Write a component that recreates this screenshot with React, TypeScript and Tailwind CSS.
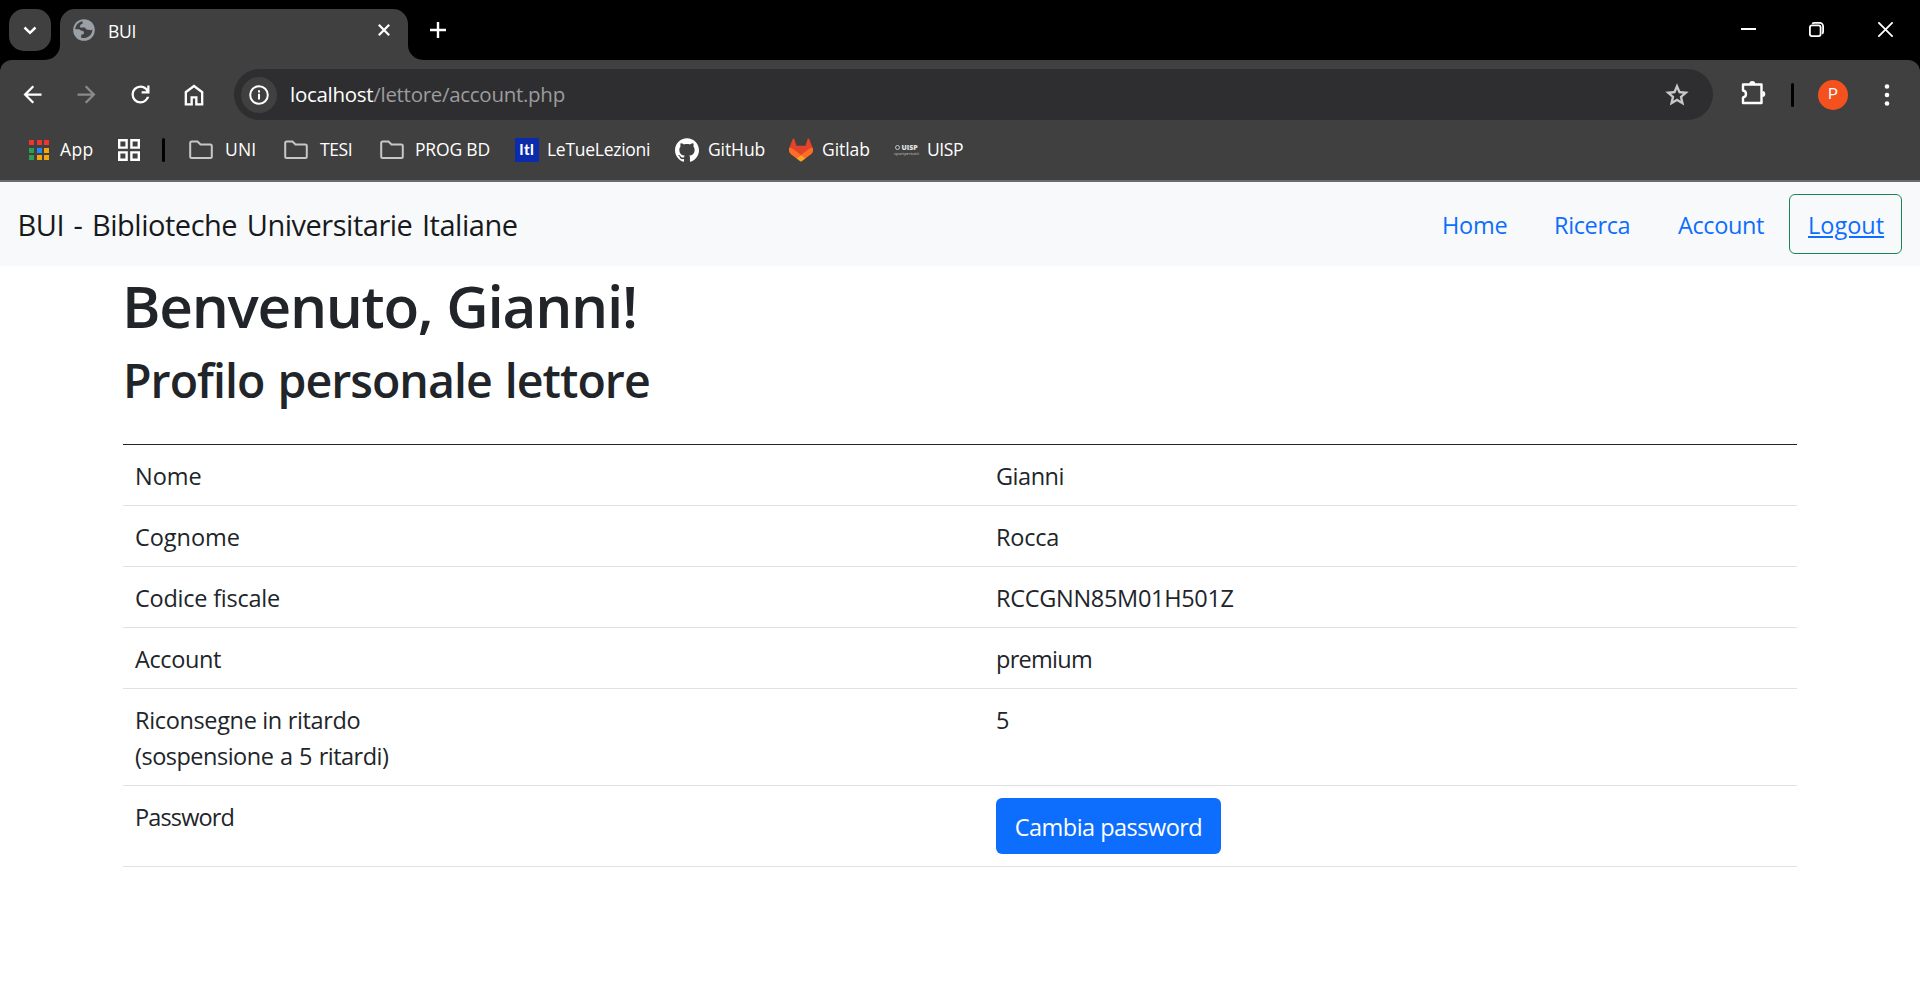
import type { ReactNode } from 'react';
import { SiGithub } from 'react-icons/si';

function Symbol({ d, size, className = '' }: { d: string; size: number; className?: string }) {
  return (
    <svg width={size} height={size} viewBox="0 -960 960 960" fill="currentColor" className={`shrink-0 ${className}`}>
      <path d={d} />
    </svg>
  );
}

const BACK = 'm313-440 224 224-57 56-320-320 320-320 57 56-224 224h487v80H313Z';
const FORWARD = 'M647-440H160v-80h487L423-744l57-56 320 320-320 320-57-56 224-224Z';
const REFRESH =
  'M480-160q-134 0-227-93t-93-227q0-134 93-227t227-93q69 0 132 28.5T720-690v-110h80v280H520v-80h168q-32-56-87.5-88T480-720q-100 0-170 70t-70 170q0 100 70 170t170 70q77 0 139-44t87-116h84q-28 106-114 173t-196 67Z';
const HOME = 'M240-200h120v-240h240v240h120v-360L480-740 240-560v360Zm-80 80v-480l320-240 320 240v480H520v-240h-80v240H160Z';
const STAR =
  'm354-287 126-76 126 77-33-144 111-96-146-13-58-136-58 135-146 13 111 97-33 143ZM233-120l65-281L80-590l288-25 112-265 112 265 288 25-218 189 65 281-247-149-247 149Z';

function Globe() {
  return (
    <svg width="22" height="22" viewBox="0 0 22 22" className="shrink-0">
      <circle cx="11" cy="11" r="10.8" fill="#9aa0a6" />
      <path d="M2.2 10.2C2.6 6 5.6 3 9.4 2.3l.3 1.6c0 .9-.8 1.1-1.6 1.3-.8.3-.5 1.3-1.1 1.9-.5.5-.2 1.3.6 1.3h3.7c1.4 0 1.4 1.8 2.6 2.1 1.1.3 2 .1 2.9.5 1 .4 1.7 0 2.7-.4-.1 2.200-.9 4.200-2.300 5.700-1.200 1.200-2.600 2-4.200 2.400-1.700.5-3.500.4-5-.2l.2-1.900c.1-.9 1-1.200 1.900-1.300 1-.2.9-1.200.8-2-.1-1-.9-1.400-1.900-1.500-1.200-.1-1.900-1-2.700-1.500Z" fill="#404040" />
    </svg>
  );
}

function Puzzle() {
  return (
    <svg width="26" height="26" viewBox="0 0 26 26" className="shrink-0" fill="none">
      <path d="M2 4.500H20.500V23H2V17.500C4.600 17 5 15.600 5 14C5 12.400 4.600 11 2 10.500Z" stroke="#fff" strokeWidth="2.400" strokeLinejoin="round" />
      <path d="M8.300 4a3 3 0 0 1 6 0ZM21.300 11a3 3 0 0 1 0 6Z" fill="#fff" />
    </svg>
  );
}

function Folder() {
  return (
    <svg width="24" height="20" viewBox="0 0 24 20" fill="none" stroke="#c7c7c7" strokeWidth="2">
      <path d="M1.200 3q0-1.500 1.500-1.500h5.800l3 3h9.800q1.500 0 1.500 1.500v10.500q0 1.500-1.500 1.500H2.700q-1.500 0-1.500-1.500Z" />
    </svg>
  );
}

function AppsDots() {
  const colors = ['#f0352d', '#f0352d', '#f0352d', '#2f9e52', '#1e88f5', '#f2a60c', '#2f9e52', '#f2a60c', '#f2a60c'];
  return (
    <span className="grid grid-cols-3 gap-[2.500px]">
      {colors.map((c, i) => (
        <i key={i} className="size-[5px]" style={{ background: c }} />
      ))}
    </span>
  );
}

function TabGroups() {
  return (
    <svg width="22" height="22" viewBox="0 0 22 22" fill="none" stroke="#fff" strokeWidth="2.400">
      <path d="M1.200 1.200h7.400v7.400H1.200ZM13.400 1.200h7.400v7.400h-7.400ZM1.200 13.400h7.400v7.400H1.200ZM13.400 13.400h7.400v7.400h-7.400Z" />
    </svg>
  );
}

function GitlabLogo() {
  return (
    <svg width="24" height="24" viewBox="0 0 25 24">
      <path fill="#E24329" d="m24.507 9.500-.034-.090L21.082.562a.896.896 0 0 0-1.694.091l-2.290 7.010H7.825L5.535.653a.898.898 0 0 0-1.694-.090L.451 9.411.416 9.500a6.297 6.297 0 0 0 2.090 7.278l.012.010.030.022 5.160 3.867 2.560 1.935 1.554 1.176a1.051 1.051 0 0 0 1.268 0l1.555-1.176 2.560-1.935 5.197-3.890.014-.010A6.297 6.297 0 0 0 24.507 9.500z" />
      <path fill="#FC6D26" d="m24.507 9.500-.034-.090a11.440 11.440 0 0 0-4.560 2.051l-7.447 5.632 4.742 3.584 5.197-3.890.014-.010A6.297 6.297 0 0 0 24.507 9.500z" />
      <path fill="#FCA326" d="m7.707 20.677 2.560 1.935 1.555 1.176a1.051 1.051 0 0 0 1.268 0l1.555-1.176 2.560-1.935-4.743-3.584-4.755 3.584z" />
      <path fill="#FC6D26" d="M5.010 11.461a11.430 11.430 0 0 0-4.560-2.050L.416 9.500a6.297 6.297 0 0 0 2.090 7.278l.012.010.030.022 5.160 3.867 4.745-3.584-7.444-5.632z" />
    </svg>
  );
}

function TabStrip() {
  return (
    <div className="flex h-[60px] bg-black text-white">
      <button className="mt-[9px] ml-[9px] flex size-[42px] items-center justify-center rounded-[15px] bg-[#404040]">
        <svg width="14" height="9" viewBox="0 0 14 9" fill="none" stroke="#fff" strokeWidth="2.500">
          <path d="m1.500 1.500 5.500 5.300 5.500-5.300" />
        </svg>
      </button>
      <div className="relative mt-[9px] ml-[9px] flex h-[51px] w-[348px] rounded-t-[15px] bg-[#404040] pt-[10px] pl-[13px]">
        <svg className="absolute bottom-0 -left-[15px]" width="15" height="15" viewBox="0 0 15 15">
          <path d="M15 0v15H0A15 15 0 0 0 15 0Z" fill="#404040" />
        </svg>
        <svg className="absolute -right-[15px] bottom-0" width="15" height="15" viewBox="0 0 15 15">
          <path d="M0 0v15h15A15 15 0 0 1 0 0Z" fill="#404040" />
        </svg>
        <Globe />
        <span className="ml-[13px] h-6 text-[17.500px] leading-6 tracking-[-0.280px]">BUI</span>
        <svg className="mt-[5px] mr-[18px] ml-auto" width="12" height="12" viewBox="0 0 12 12" stroke="#fff" strokeWidth="2.200">
          <path d="m.8.8 10.400 10.400M11.200.8.8 11.200" />
        </svg>
      </div>
      <svg className="mt-[22px] ml-[22px]" width="16" height="16" viewBox="0 0 16 16" stroke="#fff" strokeWidth="2.400">
        <path d="M8 0v16M0 8h16" />
      </svg>
      <div className="mr-[27px] ml-auto flex gap-[53px] pt-[22px]">
        <svg width="15" height="15" viewBox="0 0 15 15" stroke="#fff" strokeWidth="2">
          <path d="M0 7h15" />
        </svg>
        <svg width="15" height="15" viewBox="0 0 15 15" fill="none" stroke="#fff" strokeWidth="1.800">
          <rect x=".9" y="3.400" width="10.700" height="10.700" rx="2" />
          <path d="M3.300 1.800Q4 .9 5.500.9h5.200a3.400 3.400 0 0 1 3.400 3.400v5.200q0 1.500-.9 2.200" />
        </svg>
        <svg className="ml-px" width="15" height="15" viewBox="0 0 15 15" stroke="#fff" strokeWidth="1.800">
          <path d="m.3.300 14.400 14.400M14.700.3.300 14.700" />
        </svg>
      </div>
    </div>
  );
}

function Toolbar() {
  return (
    <div className="bg-black">
      <div className="flex h-[69px] items-center rounded-t-[12px] bg-[#404040] text-white">
        <Symbol d={BACK} size={27} className="ml-[19px]" />
        <Symbol d={FORWARD} size={27} className="ml-[27px] text-[#8a8a8a]" />
        <Symbol d={REFRESH} size={27} className="ml-[27px]" />
        <Symbol d={HOME} size={28} className="ml-[26px]" />
        <div className="ml-[26px] flex h-[51px] w-[1479px] shrink-0 items-center rounded-full bg-[#2e2e30] pl-[7px]">
          <span className="flex size-9 items-center justify-center rounded-full bg-[#404041]">
            <svg width="20" height="20" viewBox="0 0 20 20" fill="none" stroke="#fff" strokeWidth="2">
              <circle cx="10" cy="10" r="8.800" />
              <path d="M10 8.800v5.700M10 5.300v2.200" />
            </svg>
          </span>
          <span className="mb-[1px] ml-[13px] text-[20.500px] leading-7 tracking-[-0.290px] text-[#9c9c9d]">
            <span className="text-white">localhost</span>/lettore/account.php
          </span>
          <Symbol d={STAR} size={28} className="mr-[22px] ml-auto text-[#c7c7c7]" />
        </div>
        <span className="-mt-[3px] ml-[28px]">
          <Puzzle />
        </span>
        <i className="ml-[24px] h-6 w-[3px] rounded-full bg-black" />
        <span className="ml-[24px] flex size-[30px] items-center justify-center rounded-full bg-[#f4511e] pt-px font-[Roboto] text-[15.500px] leading-none">P</span>
        <svg className="ml-[36px]" width="6" height="22" viewBox="0 0 6 22" fill="#fff">
          <circle cx="3" cy="2.500" r="2.300" />
          <circle cx="3" cy="11" r="2.300" />
          <circle cx="3" cy="19.500" r="2.300" />
        </svg>
      </div>
    </div>
  );
}

function Bookmark({ icon, label, className }: { icon: ReactNode; label: string; className: string }) {
  return (
    <a className={`flex shrink-0 items-center whitespace-nowrap ${className}`}>
      {icon}
      <span className="-mt-[3px]">{label}</span>
    </a>
  );
}

function BookmarksBar() {
  return (
    <div className="flex h-[53px] items-center border-b-2 border-[#6b6b6b] bg-[#404040] pb-[9px] pl-[29px] text-[17.500px] leading-6 text-white">
      <Bookmark icon={<AppsDots />} label="App" className="w-[89px] gap-[11px] tracking-[0.400px]" />
      <span className="w-[44px]">
        <TabGroups />
      </span>
      <i className="mr-[24px] h-6 w-[3px] rounded-full bg-black" />
      <Bookmark icon={<Folder />} label="UNI" className="w-[95px] gap-[12px] tracking-[0.200px]" />
      <Bookmark icon={<Folder />} label="TESI" className="w-[96px] gap-[12px] tracking-[-0.400px]" />
      <Bookmark icon={<Folder />} label="PROG BD" className="w-[135px] gap-[11px] tracking-[-0.170px]" />
      <Bookmark
        icon={
          <span className="flex size-6 items-center justify-center bg-[#0a2bab] pb-[1px] font-[Lato] text-[15px] leading-none font-black tracking-[0.500px]">
            ltl
          </span>
        }
        label="LeTueLezioni"
        className="w-[160px] gap-[8px] tracking-[-0.270px]"
      />
      <Bookmark icon={<SiGithub size={24} />} label="GitHub" className="w-[114px] gap-[9px] tracking-[-0.100px]" />
      <Bookmark icon={<GitlabLogo />} label="Gitlab" className="w-[106px] gap-[9px] tracking-[-0.050px]" />
      <Bookmark
        icon={
          <span className="flex w-[23px] flex-col items-center font-bold tracking-normal">
            <span className="flex items-center gap-px text-[7px] leading-[7px] font-extrabold text-[#e0e0e0]">
              <i className="size-[5px] rounded-full border border-[#c8c8c8]" />
              UISP
            </span>
            <span className="text-[4px] leading-[5px] font-semibold text-[#a8a8a8]">sportpertutti</span>
          </span>
        }
        label="UISP"
        className="gap-[9px] tracking-[-0.400px]"
      />
    </div>
  );
}

function Navbar() {
  return (
    <nav className="flex h-[84px] items-center bg-[#f8f9fb] pr-[18px] pl-[17.500px]">
      <span className="mt-px text-[29px] leading-[45px] tracking-[-0.480px] text-[#17191b] [word-spacing:2.500px]">
        BUI - Biblioteche Universitarie Italiane
      </span>
      <div className="ml-auto flex items-center text-[23.500px] leading-9 text-[#0d6efd]">
        <a className="w-[112px] pt-[2px] tracking-[-0.250px]">Home</a>
        <a className="w-[124px] pt-[2px] tracking-[-0.370px]">Ricerca</a>
        <a className="w-[111px] pt-[2px] tracking-[-0.390px]">Account</a>
        <a className="h-[60px] w-[113px] rounded-[6px] border border-[#198754] pt-[12px] pl-[18px] underline decoration-2 underline-offset-2">
          Logout
        </a>
      </div>
    </nav>
  );
}

function Row({ label, children }: { label: ReactNode; children: ReactNode }) {
  return (
    <tr className="align-top">
      <td className="w-[861px] pt-[13px] pb-[11px] pl-[12px]">{label}</td>
      {children}
    </tr>
  );
}

const valueCell = 'pt-[13px] pb-[11px] pl-[12px]';

function Profile() {
  return (
    <main className="mx-[123px] text-[#212529]">
      <h1 className="-ml-px pt-[3px] text-[58.500px] leading-[72px] font-semibold tracking-[-1.300px]">Benvenuto, Gianni!</h1>
      <h2 className="mt-[10px] text-[46.500px] leading-[58px] font-semibold tracking-[-0.980px] [word-spacing:2px]">Profilo personale lettore</h2>
      <table className="mt-[35px] w-full border-separate border-spacing-0 border-t border-[#212529] text-[23.500px] leading-9 [&_td]:border-b [&_td]:border-[#dee2e6]">
        <tbody>
          <Row label={<span className="tracking-[-0.050px]">Nome</span>}>
            <td className={`${valueCell} tracking-[-0.480px]`}>Gianni</td>
          </Row>
          <Row label={<span className="tracking-[-0.050px]">Cognome</span>}>
            <td className={`${valueCell} tracking-[-0.250px]`}>Rocca</td>
          </Row>
          <Row label={<span className="tracking-[-0.240px]">Codice fiscale</span>}>
            <td className={`${valueCell} tracking-[-0.300px]`}>RCCGNN85M01H501Z</td>
          </Row>
          <Row label={<span className="tracking-[-0.390px]">Account</span>}>
            <td className={`${valueCell} tracking-[-0.710px]`}>premium</td>
          </Row>
          <Row
            label={
              <>
                <span className="tracking-[-0.350px]">Riconsegne in ritardo</span>
                <br />
                <span className="tracking-[-0.500px] [word-spacing:1px]">(sospensione a 5 ritardi)</span>
              </>
            }
          >
            <td className={valueCell}>5</td>
          </Row>
          <Row label={<span className="tracking-[-0.850px]">Password</span>}>
            <td className="py-[12px] pl-[12px]">
              <button className="block h-[56px] w-[225px] rounded-[6px] bg-[#0d6efd] pt-[2px] text-center tracking-[-0.520px] text-white">
                Cambia password
              </button>
            </td>
          </Row>
        </tbody>
      </table>
    </main>
  );
}

export default function App() {
  return (
    <div className="h-[1008px] w-[1920px] overflow-hidden bg-white font-['Open_Sans','Noto_Sans',sans-serif]">
      <TabStrip />
      <Toolbar />
      <BookmarksBar />
      <Navbar />
      <Profile />
    </div>
  );
}
